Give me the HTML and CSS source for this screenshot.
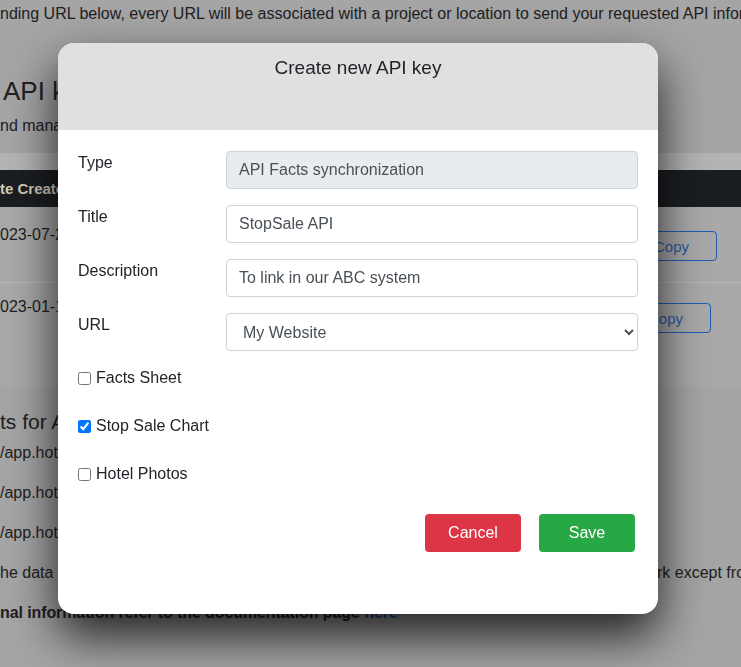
FILE: index.html
```html
<!DOCTYPE html>
<html lang="en">
<head>
    <meta charset="UTF-8">
    <meta name="viewport" content="width=device-width, initial-scale=1.0">
    <title>API keys</title>
    <link rel="stylesheet" href="styles.css">
</head>
<body>
    <div class="page">
        <p class="intro">nding URL below, every URL will be associated with a project or location to send your requested API information.</p>
        <h1 class="page-title">API keys</h1>
        <p class="lead">nd manage your API keys</p>

        <div class="keys-card">
            <div class="keys-head">
                <span>te Created</span>
            </div>
            <div class="keys-row first">
                <span class="date">023-07-25</span>
                <button type="button" class="copy-btn">Copy</button>
            </div>
            <div class="keys-row second">
                <span class="date">023-01-14</span>
                <button type="button" class="copy-btn">Copy</button>
            </div>
        </div>

        <h2 class="section-title">ts for API</h2>
        <p class="url-line">/app.hotel.com/api/facts</p>
        <p class="url-line">/app.hotel.com/api/stopsale</p>
        <p class="url-line">/app.hotel.com/api/photos</p>
        <p class="note-line"><span class="note-left">he data</span><span>rk except from the registered URL.</span></p>
        <p class="bold-line">nal information refer to the documentation page <a href="#">here</a></p>
    </div>

    <div class="backdrop">
        <div class="modal">
            <div class="modal-header">
                <h5 class="modal-title">Create new API key</h5>
            </div>
            <form class="modal-body" id="apiKeyForm" onsubmit="event.preventDefault();">
                <div class="field-grid">
                    <label class="field-label" for="type">Type</label>
                    <input class="form-control" type="text" id="type" value="API Facts synchronization" disabled>

                    <label class="field-label" for="title">Title</label>
                    <input class="form-control" type="text" id="title" value="StopSale API">

                    <label class="field-label" for="description">Description</label>
                    <input class="form-control" type="text" id="description" value="To link in our ABC system">

                    <label class="field-label" for="url">URL</label>
                    <select class="form-control" id="url">
                        <option>My Website</option>
                        <option>Booking Engine</option>
                    </select>
                </div>

                <div class="checks">
                    <label class="check"><input type="checkbox" name="factsSheet">Facts Sheet</label>
                    <label class="check"><input type="checkbox" name="stopSaleChart" checked>Stop Sale Chart</label>
                    <label class="check"><input type="checkbox" name="hotelPhotos">Hotel Photos</label>
                </div>

                <div class="modal-footer">
                    <button type="button" class="btn btn-cancel">Cancel</button>
                    <button type="submit" class="btn btn-save">Save</button>
                </div>
            </form>
        </div>
    </div>
</body>
</html>
```

FILE: styles.css
```css
html, body {
    margin: 0;
    height: 100%;
    overflow: hidden;
}

body {
    background-color: #a5a5a5;
    color: #1f2022;
    font-family: "Liberation Sans", Arial, sans-serif;
    font-size: 16px;
    line-height: 24px;
}

.page {
    padding-top: 2px;
}

.page p {
    margin: 0;
    white-space: nowrap;
}

.page-title {
    margin: 50px 0 0 3px;
    font-size: 26px;
    line-height: 31px;
    font-weight: normal;
}

.lead {
    margin-top: 7px !important;
}

.keys-card {
    margin-top: 15px;
    background-color: #a9a9a9;
    border-top: 17px solid #b4b4b4;
    height: 216px;
}

.keys-head {
    background-color: #1b1e21;
    color: #d3cab8;
    font-weight: bold;
    font-size: 15px;
    height: 37px;
    line-height: 37px;
}

.keys-row {
    display: flex;
    align-items: flex-start;
    justify-content: space-between;
}

.keys-row.first {
    height: 59px;
    padding-top: 16px;
    border-bottom: 1px solid #b8b8b8;
}

.keys-row.second {
    padding-top: 12px;
}

.copy-btn {
    width: 76px;
    height: 30px;
    margin-top: 8px;
    padding: 0 0 0 12px;
    text-align: left;
    background: transparent;
    border: 1px solid #1f5db3;
    border-radius: 4px;
    color: #2a5a9e;
    font-family: inherit;
    font-size: 15px;
}

.keys-row.first .copy-btn {
    margin-right: 24px;
}

.keys-row.second .copy-btn {
    margin-right: 30px;
}

.section-title {
    margin: 23px 0 0 0;
    font-size: 21px;
    line-height: 26px;
    font-weight: normal;
}

.url-line {
    margin-top: 6px !important;
}

.url-line + .url-line {
    margin-top: 16px !important;
}

.note-line {
    display: flex;
    margin-top: 16px !important;
}

.note-left {
    width: 657px;
    flex-shrink: 0;
}

.bold-line {
    margin-top: 16px !important;
    font-weight: bold;
    letter-spacing: -0.1px;
}

.bold-line a {
    color: #1f4c94;
    text-decoration: none;
}

/* modal */

.backdrop {
    position: fixed;
    inset: 0;
    padding: 43px 0 0 58px;
}

.modal {
    width: 600px;
    height: 571px;
    background-color: #fff;
    border-radius: 16px;
    overflow: hidden;
    box-shadow: 0 22px 48px rgba(0, 0, 0, 0.8);
    display: flex;
    flex-direction: column;
}

.modal-header {
    height: 87px;
    flex-shrink: 0;
    background-color: #e0e0e0;
    text-align: center;
}

.modal-title {
    margin: 13px 0 0 0;
    font-size: 19px;
    line-height: 24px;
    font-weight: normal;
    color: #212529;
}

.modal-body {
    flex: 1;
    padding: 21px 20px 0 20px;
    color: #212529;
}

.field-grid {
    display: grid;
    grid-template-columns: 148px 1fr;
    row-gap: 16px;
}

.field-label {
    line-height: 24px;
}

.form-control {
    box-sizing: border-box;
    width: 100%;
    height: 38px;
    padding: 6px 12px;
    border: 1px solid #ced4da;
    border-radius: 4px;
    background-color: #fff;
    color: #495057;
    font-family: inherit;
    font-size: 16px;
}

.form-control:disabled {
    background-color: #e9ecef;
    opacity: 1;
}

select.form-control {
    padding-left: 12px;
}

.checks {
    display: flex;
    flex-direction: column;
    gap: 24px;
    margin-top: 15px;
}

.check {
    display: flex;
    align-items: center;
    line-height: 24px;
}

.check input {
    width: 13px;
    height: 13px;
    margin: 0 5px 0 0;
}

.modal-footer {
    display: flex;
    justify-content: flex-end;
    gap: 18px;
    margin-top: 28px;
    padding-right: 3px;
}

.btn {
    width: 96px;
    height: 38px;
    border: none;
    border-radius: 4px;
    color: #fff;
    font-family: inherit;
    font-size: 16px;
    cursor: pointer;
}

.btn-cancel {
    background-color: #dc3545;
}

.btn-save {
    background-color: #28a745;
}
```
